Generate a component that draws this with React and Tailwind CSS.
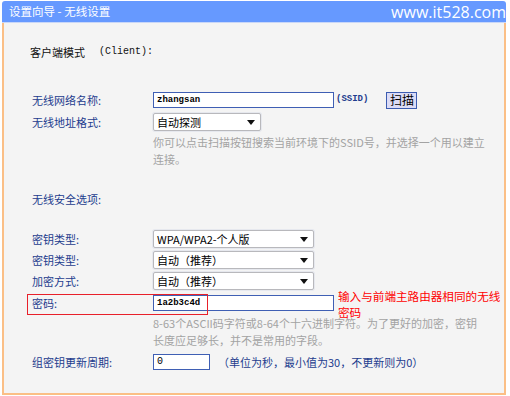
import React from "react";

const CJK = "font-['Noto_Sans_CJK_SC','Noto_Sans',sans-serif]";
const MONO = "font-['Liberation_Mono',monospace]";

function Arrow() {
  return (
    <svg width="8" height="5" viewBox="0 0 8 5" className="shrink-0">
      <path d="M0 0 H8 L4 5 Z" fill="#111" />
    </svg>
  );
}

function Select({ w, children }) {
  return (
    <div
      className={`${w} h-[18px] bg-white border border-[#b8b8bc] rounded-[2px] shadow-[0_0_0_1px_#e6e8ee] flex items-center justify-between pl-[3px] pr-[5px] text-[11px] text-black leading-none`}
    >
      <span>{children}</span>
      <Arrow />
    </div>
  );
}

function Input({ w, children }) {
  return (
    <div
      className={`${w} h-[16px] bg-white border border-[#3f5fb4] flex items-center pl-[3px] ${MONO} text-[9px] font-bold text-black leading-none`}
    >
      {children}
    </div>
  );
}

function Label({ children }) {
  return (
    <div className="w-[121px] shrink-0 text-[#1d3c8e] text-[11px] leading-none">
      {children}
    </div>
  );
}

export default function App() {
  return (
    <div className={`w-[510px] h-[396px] bg-white ${CJK}`}>
      <div className="ml-[2px] pt-[1px] w-[504px]">
        <div className="h-[22px] bg-[#6699ff] rounded-t-[3px] border-b border-[#c9d7f8] flex items-center justify-between pl-[7px]">
          <span className="text-white text-[11.5px] leading-none">设置向导 - 无线设置</span>
          <span className="text-white text-[16px] leading-none font-['Open_Sans',sans-serif]">
            www.it528.com
          </span>
        </div>
        <div className="h-[372px] bg-[#f4f4f4] border-x-2 border-b-2 border-[#fbbf86] pl-[28px] pt-[20px]">
          <div className="h-[18px] flex items-center -ml-[2px] text-[11px] text-[#111] leading-none">
            <span>客户端模式</span>
            <span className={`${MONO} text-[10px] ml-[14px]`}>(Client):</span>
          </div>

          <div className="h-[18px] mt-[30px] flex items-center">
            <Label>无线网络名称:</Label>
            <Input w="w-[181px]">zhangsan</Input>
            <span className={`${MONO} text-[9px] font-bold text-[#1d3c8e] ml-[2px]`}>(SSID)</span>
            <button className="ml-[18px] w-[31px] h-[17px] bg-[#dcdcf6] border border-[#3c5cb0] text-[12px] text-black leading-none flex items-center justify-center">
              扫描
            </button>
          </div>

          <div className="h-[18px] mt-[4px] flex items-center">
            <Label>无线地址格式:</Label>
            <Select w="w-[108px]">自动探测</Select>
          </div>

          <div className="mt-[3px] ml-[121px] text-[11px] leading-[17px] text-[#a3a3a3] w-[340px] whitespace-nowrap">
            你可以点击扫描按钮搜索当前环境下的SSID号，并选择一个用以建立
            <br />
            连接。
          </div>

          <div className="h-[18px] mt-[22px] flex items-center">
            <Label>无线安全选项:</Label>
          </div>

          <div className="h-[18px] mt-[22px] flex items-center">
            <Label>密钥类型:</Label>
            <Select w="w-[161px]">WPA/WPA2-个人版</Select>
          </div>
          <div className="h-[18px] mt-[3px] flex items-center">
            <Label>密钥类型:</Label>
            <Select w="w-[161px]">自动（推荐）</Select>
          </div>
          <div className="h-[18px] mt-[3px] flex items-center">
            <Label>加密方式:</Label>
            <Select w="w-[161px]">自动（推荐）</Select>
          </div>

          <div className="h-[18px] mt-[4px] flex items-center relative">
            <div className="absolute left-[-5px] top-0 w-[181px] h-[21px] border border-[#e8202a]" />
            <Label>密码:</Label>
            <Input w="w-[181px]">1a2b3c4d</Input>
            <div className="self-start -mt-[6px] ml-[4px] w-[166px] text-[11.6px] leading-[16px] text-[#ff0000]">
              输入与前端主路由器相同的无线密码
            </div>
          </div>

          <div className="mt-[3px] ml-[121px] text-[11px] leading-[17px] text-[#a3a3a3] w-[340px] whitespace-nowrap">
            8-63个ASCII码字符或8-64个十六进制字符。为了更好的加密，密钥
            <br />
            长度应足够长，并不是常用的字段。
          </div>

          <div className="h-[18px] mt-[4px] flex items-center">
            <Label>组密钥更新周期:</Label>
            <Input w="w-[57px]">
              <span className="font-normal text-[10px]">0</span>
            </Input>
            <span className="ml-[8px] text-[11px] text-[#1d3c8e] leading-none">
              （单位为秒，最小值为30，不更新则为0）
            </span>
          </div>
        </div>
      </div>
    </div>
  );
}
